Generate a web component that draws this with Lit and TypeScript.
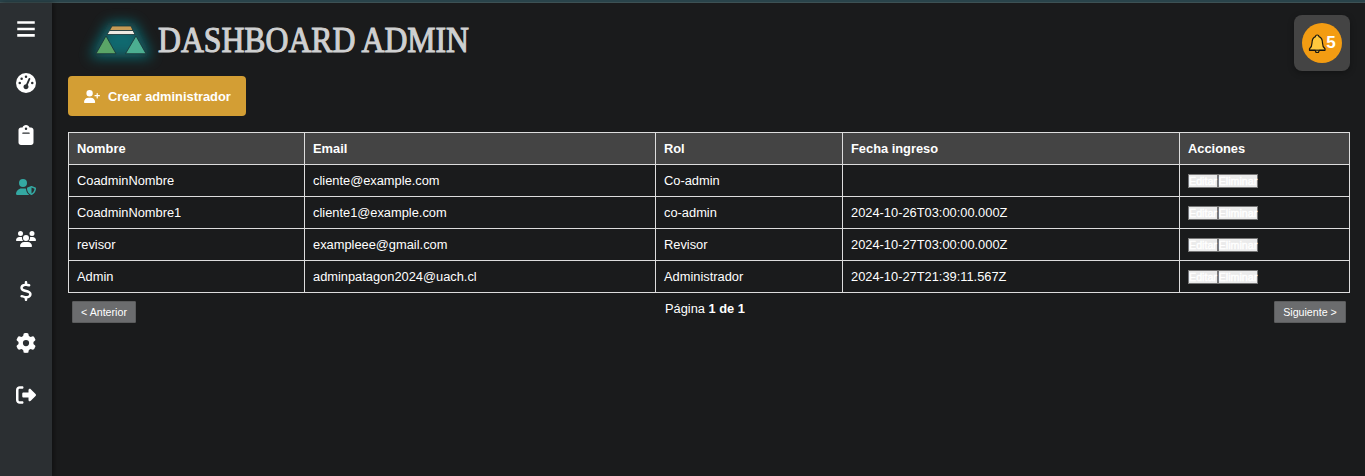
import { LitElement, html, css, svg } from "lit";
import { customElement, property } from "lit/decorators.js";

const ICONS: Record<string, [number, string]> = {
  bars: [448, "M0 56H448V124H0zM0 222H448V290H0zM0 384H448V452H0z"],
  gauge: [512, "M0 256a256 256 0 1 1 512 0A256 256 0 1 1 0 256zM288 96a32 32 0 1 0 -64 0 32 32 0 1 0 64 0zM256 416c35.3 0 64-28.7 64-64c0-17.4-6.9-33.1-18.1-44.6L366 161.7c5.3-12.1-.2-26.3-12.3-31.6s-26.3 .2-31.6 12.3L257.9 288c-.6 0-1.3 0-1.9 0c-35.3 0-64 28.7-64 64s28.7 64 64 64zM176 144a32 32 0 1 0 -64 0 32 32 0 1 0 64 0zM96 288a32 32 0 1 0 0-64 32 32 0 1 0 0 64zm352-32a32 32 0 1 0 -64 0 32 32 0 1 0 64 0z"],
  clipboard: [384, "M192 0c-41.8 0-77.4 26.7-90.5 64H64C28.7 64 0 92.7 0 128V448c0 35.3 28.7 64 64 64H320c35.3 0 64-28.7 64-64V128c0-35.3-28.7-64-64-64H282.5C269.4 26.7 233.8 0 192 0zm0 64a32 32 0 1 1 0 64 32 32 0 1 1 0-64zM112 192H272c8.8 0 16 7.2 16 16s-7.2 16-16 16H112c-8.8 0-16-7.2-16-16s7.2-16 16-16z"],
  shield: [640, "M224 256A128 128 0 1 0 224 0a128 128 0 1 0 0 256zm-45.7 48C79.8 304 0 383.8 0 482.3C0 498.7 13.3 512 29.7 512H418.3c1.8 0 3.5-.2 5.3-.5c-76.3-55.1-99.8-141-103.1-200.2c-16.1-4.8-33.1-7.3-50.7-7.3H178.3zm308.8-78.3l-120 48C358 277.4 352 286.2 352 296c0 63.3 25.9 168.8 134.8 214.2c5.9 2.5 12.6 2.5 18.5 0C614.1 464.8 640 359.3 640 296c0-9.8-6-18.6-15.1-22.3l-120-48c-5.7-2.3-12.1-2.3-17.8 0zM591.4 312c-3.9 50.7-27.2 116.7-95.4 149.7V273.8L591.4 312z"],
  users: [640, "M144 0a80 80 0 1 1 0 160A80 80 0 1 1 144 0zM512 0a80 80 0 1 1 0 160A80 80 0 1 1 512 0zM0 298.7C0 239.8 47.8 192 106.7 192h42.7c15.9 0 31 3.5 44.6 9.7c-1.3 7.2-1.9 14.7-1.9 22.3c0 38.2 16.8 72.5 43.3 96c-.2 0-.4 0-.7 0H21.3C9.6 320 0 310.4 0 298.7zM405.3 320c-.2 0-.4 0-.7 0c26.6-23.5 43.3-57.8 43.3-96c0-7.6-.7-15-1.9-22.3c13.6-6.3 28.7-9.7 44.6-9.7h42.7C592.2 192 640 239.8 640 298.7c0 11.8-9.6 21.3-21.3 21.3H405.3zM224 224a96 96 0 1 1 192 0 96 96 0 1 1 -192 0zM128 485.3C128 411.7 187.7 352 261.3 352H378.7C452.3 352 512 411.7 512 485.3c0 14.7-11.9 26.7-26.7 26.7H154.7c-14.7 0-26.7-11.9-26.7-26.7z"],
  dollar: [320, "M160 0c17.7 0 32 14.3 32 32V67.7c1.6 .2 3.1 .4 4.7 .7c.4 .1 .7 .1 1.1 .2l48 8.8c17.4 3.2 28.9 19.9 25.7 37.2s-19.9 28.9-37.2 25.7l-47.5-8.7c-31.3-4.6-58.9-1.5-78.3 6.2s-27.2 18.3-29 28.1c-2 10.7-.5 16.7 1.2 20.4c1.8 3.9 5.5 8.3 12.8 13.2c16.3 10.7 41.3 17.7 73.7 26.3l2.9 .8c28.6 7.6 63.6 16.8 89.6 33.8c14.2 9.3 27.6 21.9 35.9 39.5c8.5 17.9 10.3 37.9 6.4 59.2c-6.9 38-33.1 63.4-65.6 76.7c-13.7 5.6-28.6 9.2-44.4 11V480c0 17.7-14.3 32-32 32s-32-14.3-32-32V445.1c-.4-.1-.9-.1-1.3-.2l-.2 0 0 0c-24.4-3.8-64.5-14.3-91.5-26.3c-16.1-7.2-23.4-26.1-16.2-42.2s26.1-23.4 42.2-16.2c20.9 9.3 55.3 18.5 75.2 21.6c31.9 4.7 58.2 2 76-5.3c16.9-6.9 24.6-16.9 26.8-28.9c1.9-10.6 .4-16.7-1.3-20.4c-1.9-4-5.6-8.4-13-13.3c-16.4-10.7-41.5-17.7-74-26.3l-2.8-.7 0 0C119.4 279.3 84.4 270 58.4 253c-14.2-9.3-27.5-22-35.8-39.6c-8.4-17.9-10.1-37.9-6.1-59.2C23.7 116 52.3 91.2 84.8 78.3c13.3-5.3 27.9-8.9 43.2-11V32c0-17.7 14.3-32 32-32z"],
  gear: [512, "M495.9 166.6c3.2 8.7 .5 18.4-6.4 24.6l-43.3 39.4c1.1 8.3 1.7 16.8 1.7 25.4s-.6 17.1-1.7 25.4l43.3 39.4c6.9 6.2 9.6 15.9 6.4 24.6c-4.4 11.9-9.7 23.3-15.8 34.3l-4.7 8.1c-6.6 11-14 21.4-22.1 31.2c-5.9 7.2-15.7 9.6-24.5 6.8l-55.7-17.7c-13.4 10.3-28.2 18.9-44 25.4l-12.5 57.1c-2 9.1-9 16.3-18.2 17.8c-13.8 2.3-28 3.5-42.5 3.5s-28.7-1.2-42.5-3.5c-9.2-1.5-16.2-8.7-18.2-17.8l-12.5-57.1c-15.8-6.5-30.6-15.1-44-25.4L83.1 425.9c-8.8 2.8-18.6 .3-24.5-6.8c-8.1-9.8-15.5-20.2-22.1-31.2l-4.7-8.1c-6.1-11-11.4-22.4-15.8-34.3c-3.2-8.7-.5-18.4 6.4-24.6l43.3-39.4C64.6 273.1 64 264.6 64 256s.6-17.1 1.7-25.4L22.4 191.2c-6.9-6.2-9.6-15.9-6.4-24.6c4.4-11.9 9.7-23.3 15.8-34.3l4.7-8.1c6.6-11 14-21.4 22.1-31.2c5.9-7.2 15.7-9.6 24.5-6.8l55.7 17.7c13.4-10.3 28.2-18.9 44-25.4l12.5-57.1c2-9.1 9-16.3 18.2-17.8C227.3 1.2 241.5 0 256 0s28.7 1.2 42.5 3.5c9.2 1.5 16.2 8.7 18.2 17.8l12.5 57.1c15.8 6.5 30.6 15.1 44 25.4l55.7-17.7c8.8-2.8 18.6-.3 24.5 6.8c8.1 9.8 15.5 20.2 22.1 31.2l4.7 8.1c6.1 11 11.4 22.4 15.8 34.3zM256 336a80 80 0 1 0 0-160 80 80 0 1 0 0 160z"],
  logout: [512, "M377.9 105.9L500.7 228.7c7.2 7.2 11.3 17.1 11.3 27.3s-4.1 20.1-11.3 27.3L377.9 406.1c-6.4 6.4-15 9.9-24 9.9c-18.7 0-33.9-15.2-33.9-33.9l0-62.1-128 0c-17.7 0-32-14.3-32-32l0-64c0-17.7 14.3-32 32-32l128 0 0-62.1c0-18.7 15.2-33.9 33.9-33.9c9 0 17.6 3.6 24 9.9zM160 96L96 96c-17.7 0-32 14.3-32 32l0 256c0 17.7 14.3 32 32 32l64 0c17.7 0 32 14.3 32 32s-14.3 32-32 32l-64 0c-53 0-96-43-96-96L0 128C0 75 43 32 96 32l64 0c17.7 0 32 14.3 32 32s-14.3 32-32 32z"],
  userPlus: [640, "M96 128a128 128 0 1 1 256 0A128 128 0 1 1 96 128zM0 482.3C0 383.8 79.8 304 178.3 304h91.4C368.2 304 448 383.8 448 482.3c0 16.4-13.3 29.7-29.7 29.7H29.7C13.3 512 0 498.7 0 482.3zM504 312V248H440c-13.3 0-24-10.7-24-24s10.7-24 24-24h64V136c0-13.3 10.7-24 24-24s24 10.7 24 24v64h64c13.3 0 24 10.7 24 24s-10.7 24-24 24H552v64c0 13.3-10.7 24-24 24s-24-10.7-24-24z"],
};

@customElement("app-icon")
class AppIcon extends LitElement {
  @property() name = "bars";
  static styles = css`
    :host { display: flex; align-items: center; justify-content: center; width: 20px; height: 20px; }
    svg { display: block; width: 100%; height: 100%; fill: currentColor; }
  `;
  render() {
    const [w, d] = ICONS[this.name];
    return html`<svg viewBox="0 0 ${w} 512">${svg`<path d=${d}></path>`}</svg>`;
  }
}

@customElement("side-nav")
class SideNav extends LitElement {
  static styles = css`
    :host { display: flex; flex-direction: column; align-items: center; gap: 32px; width: 52px; flex: none; box-sizing: border-box; padding-top: 16px; background: #2b2f32; color: #fff; box-shadow: 2px 0 5px rgba(0, 0, 0, 0.4); }
    .menu { margin-bottom: 2px; }
    .active { color: #34a8a2; }
  `;
  render() {
    return html`
      <app-icon class="menu" name="bars"></app-icon>
      ${["gauge", "clipboard", "shield", "users", "dollar", "gear", "logout"].map(
        (n) => html`<app-icon class=${n === "shield" ? "active" : ""} name=${n}></app-icon>`
      )}
    `;
  }
}

const ROWS = [
  ["CoadminNombre", "cliente@example.com", "Co-admin", ""],
  ["CoadminNombre1", "cliente1@example.com", "co-admin", "2024-10-26T03:00:00.000Z"],
  ["revisor", "exampleee@gmail.com", "Revisor", "2024-10-27T03:00:00.000Z"],
  ["Admin", "adminpatagon2024@uach.cl", "Administrador", "2024-10-27T21:39:11.567Z"],
];

@customElement("app-root")
class AppRoot extends LitElement {
  static styles = css`
    :host { display: flex; flex-direction: column; height: 476px; overflow: hidden; background: #1a1b1c; color: #fff; font-family: "Liberation Sans", Arial, sans-serif; font-size: 12.85px; }
    .strip { height: 3px; flex: none; box-sizing: border-box; background: #29434a; border-bottom: 1px solid #3d5154; }
    .shell { display: flex; flex: 1; min-height: 0; }
    main { flex: 1; min-width: 0; padding: 12px 15px 0 16px; }
    header { display: flex; justify-content: space-between; height: 61px; }
    .brand { display: block; width: 420px; height: 61px; overflow: visible; }
    .title { font-family: "Liberation Serif", serif; font-size: 35.5px; fill: #cfd0d1; stroke: #cfd0d1; stroke-width: 1.1px; }
    .bell { width: 56px; height: 56px; border-radius: 8px; background: #444; display: flex; align-items: center; justify-content: center; box-shadow: 0 2px 6px rgba(0, 0, 0, 0.3); }
    .disc { width: 40px; height: 40px; border-radius: 50%; background: #f39c12; display: flex; align-items: center; justify-content: center; font-weight: bold; font-size: 17px; }
    .disc svg { width: 18px; height: 20px; flex: none; margin: 2px 0 0 0; }
    .disc span { line-height: 20px; padding-bottom: 1px; }
    .create { display: flex; align-items: center; gap: 8px; width: 178px; height: 40px; padding: 0 0 0 16px; border: 0; border-radius: 4px; background: #d39e34; color: #fff; font: bold 12.85px "Liberation Sans", Arial, sans-serif; white-space: nowrap; }
    .create app-icon { width: 16px; height: 13px; }
    table { width: 1282px; margin-top: 16px; border-collapse: collapse; table-layout: fixed; }
    th, td { height: 32px; box-sizing: border-box; padding: 0 8px; border: 1px solid #ddd; text-align: left; line-height: 15px; white-space: nowrap; }
    th { background: #444; }
    .c1 { width: 236px; }
    .c2 { width: 351px; }
    .c3 { width: 187px; }
    .c4 { width: 337px; }
    .c5 { width: 170px; }
    .actions { display: flex; padding-top: 1px; }
    .act { box-sizing: border-box; height: 14px; padding: 0; border: 1px solid #767676; background: #ebebeb; color: #fff; font: 10.67px/12px "Liberation Sans", Arial, sans-serif; -webkit-text-stroke: 0.4px #fff; display: flex; justify-content: center; }
    .edit { width: 30px; }
    .del { width: 40px; }
    .pager { display: flex; justify-content: space-between; padding: 8px 4px 0; }
    .page { box-sizing: border-box; height: 22px; padding: 0; border: 1px solid #5b5c5d; background: #6b6c6e; color: #fff; font: 10.67px "Liberation Sans", Arial, sans-serif; border-radius: 1px; }
    .prev { width: 64px; }
    .next { width: 72px; }
    .info { line-height: 15px; }
  `;

  render() {
    return html`
      <div class="strip"></div>
      <div class="shell">
        <side-nav></side-nav>
        <main>
          <header>
            <svg class="brand" viewBox="68 15 420 61">
              <defs>
                <filter id="glow" x="-60%" y="-60%" width="220%" height="220%"><feGaussianBlur stdDeviation="6.5"></feGaussianBlur></filter>
              </defs>
              <path d="M110 25H133L148 55H94Z" fill="#08838b" stroke="#08838b" stroke-width="5" filter="url(#glow)" opacity=".75"></path>
              <g stroke="#183235" stroke-width=".8">
                <path d="M106 36L116 53.700H96Z" fill="#5aa567"></path>
                <path d="M136 36L146 53.700H125.500Z" fill="#4cae91"></path>
                <path d="M112 26H131L133 30.500H109.500Z" fill="#c69b56"></path>
                <path d="M109.500 30.500H133L135 34.500H107Z" fill="#eeeae2"></path>
              </g>
              <text class="title" x="158" y="52" textLength="311" lengthAdjust="spacingAndGlyphs">DASHBOARD ADMIN</text>
            </svg>
            <div class="bell">
              <div class="disc">
                <svg viewBox="0 0 18 20"><path d="M1.500 16.300V14.800Q4 12.800 4 9C4 5.300 5.500 3.300 7.500 2.600Q7.500 1 9.200 1T11 2.600C13 3.300 14.500 5.300 14.500 9Q14.500 12.800 17 14.800V16.300H11.300Q10.900 18.500 9.200 18.500T7.200 16.300Z" fill="#ffc83d" stroke="#1b1710" stroke-width="1.200" stroke-linejoin="round"></path><path d="M2 16.200H16.500" stroke="#1b1710" stroke-width="1.200"></path></svg>
                <span>5</span>
              </div>
            </div>
          </header>
          <button class="create"><app-icon name="userPlus"></app-icon>Crear administrador</button>
          <table>
            <colgroup><col class="c1" /><col class="c2" /><col class="c3" /><col class="c4" /><col class="c5" /></colgroup>
            <thead><tr>${["Nombre", "Email", "Rol", "Fecha ingreso", "Acciones"].map((h) => html`<th>${h}</th>`)}</tr></thead>
            <tbody>
              ${ROWS.map((r) => html`<tr>${r.map((c) => html`<td>${c}</td>`)}<td><div class="actions"><button class="act edit">Editar</button><button class="act del">Eliminar</button></div></td></tr>`)}
            </tbody>
          </table>
          <div class="pager">
            <button class="page prev">&lt; Anterior</button>
            <span class="info">Página <b>1 de 1</b></span>
            <button class="page next">Siguiente &gt;</button>
          </div>
        </main>
      </div>
    `;
  }
}
